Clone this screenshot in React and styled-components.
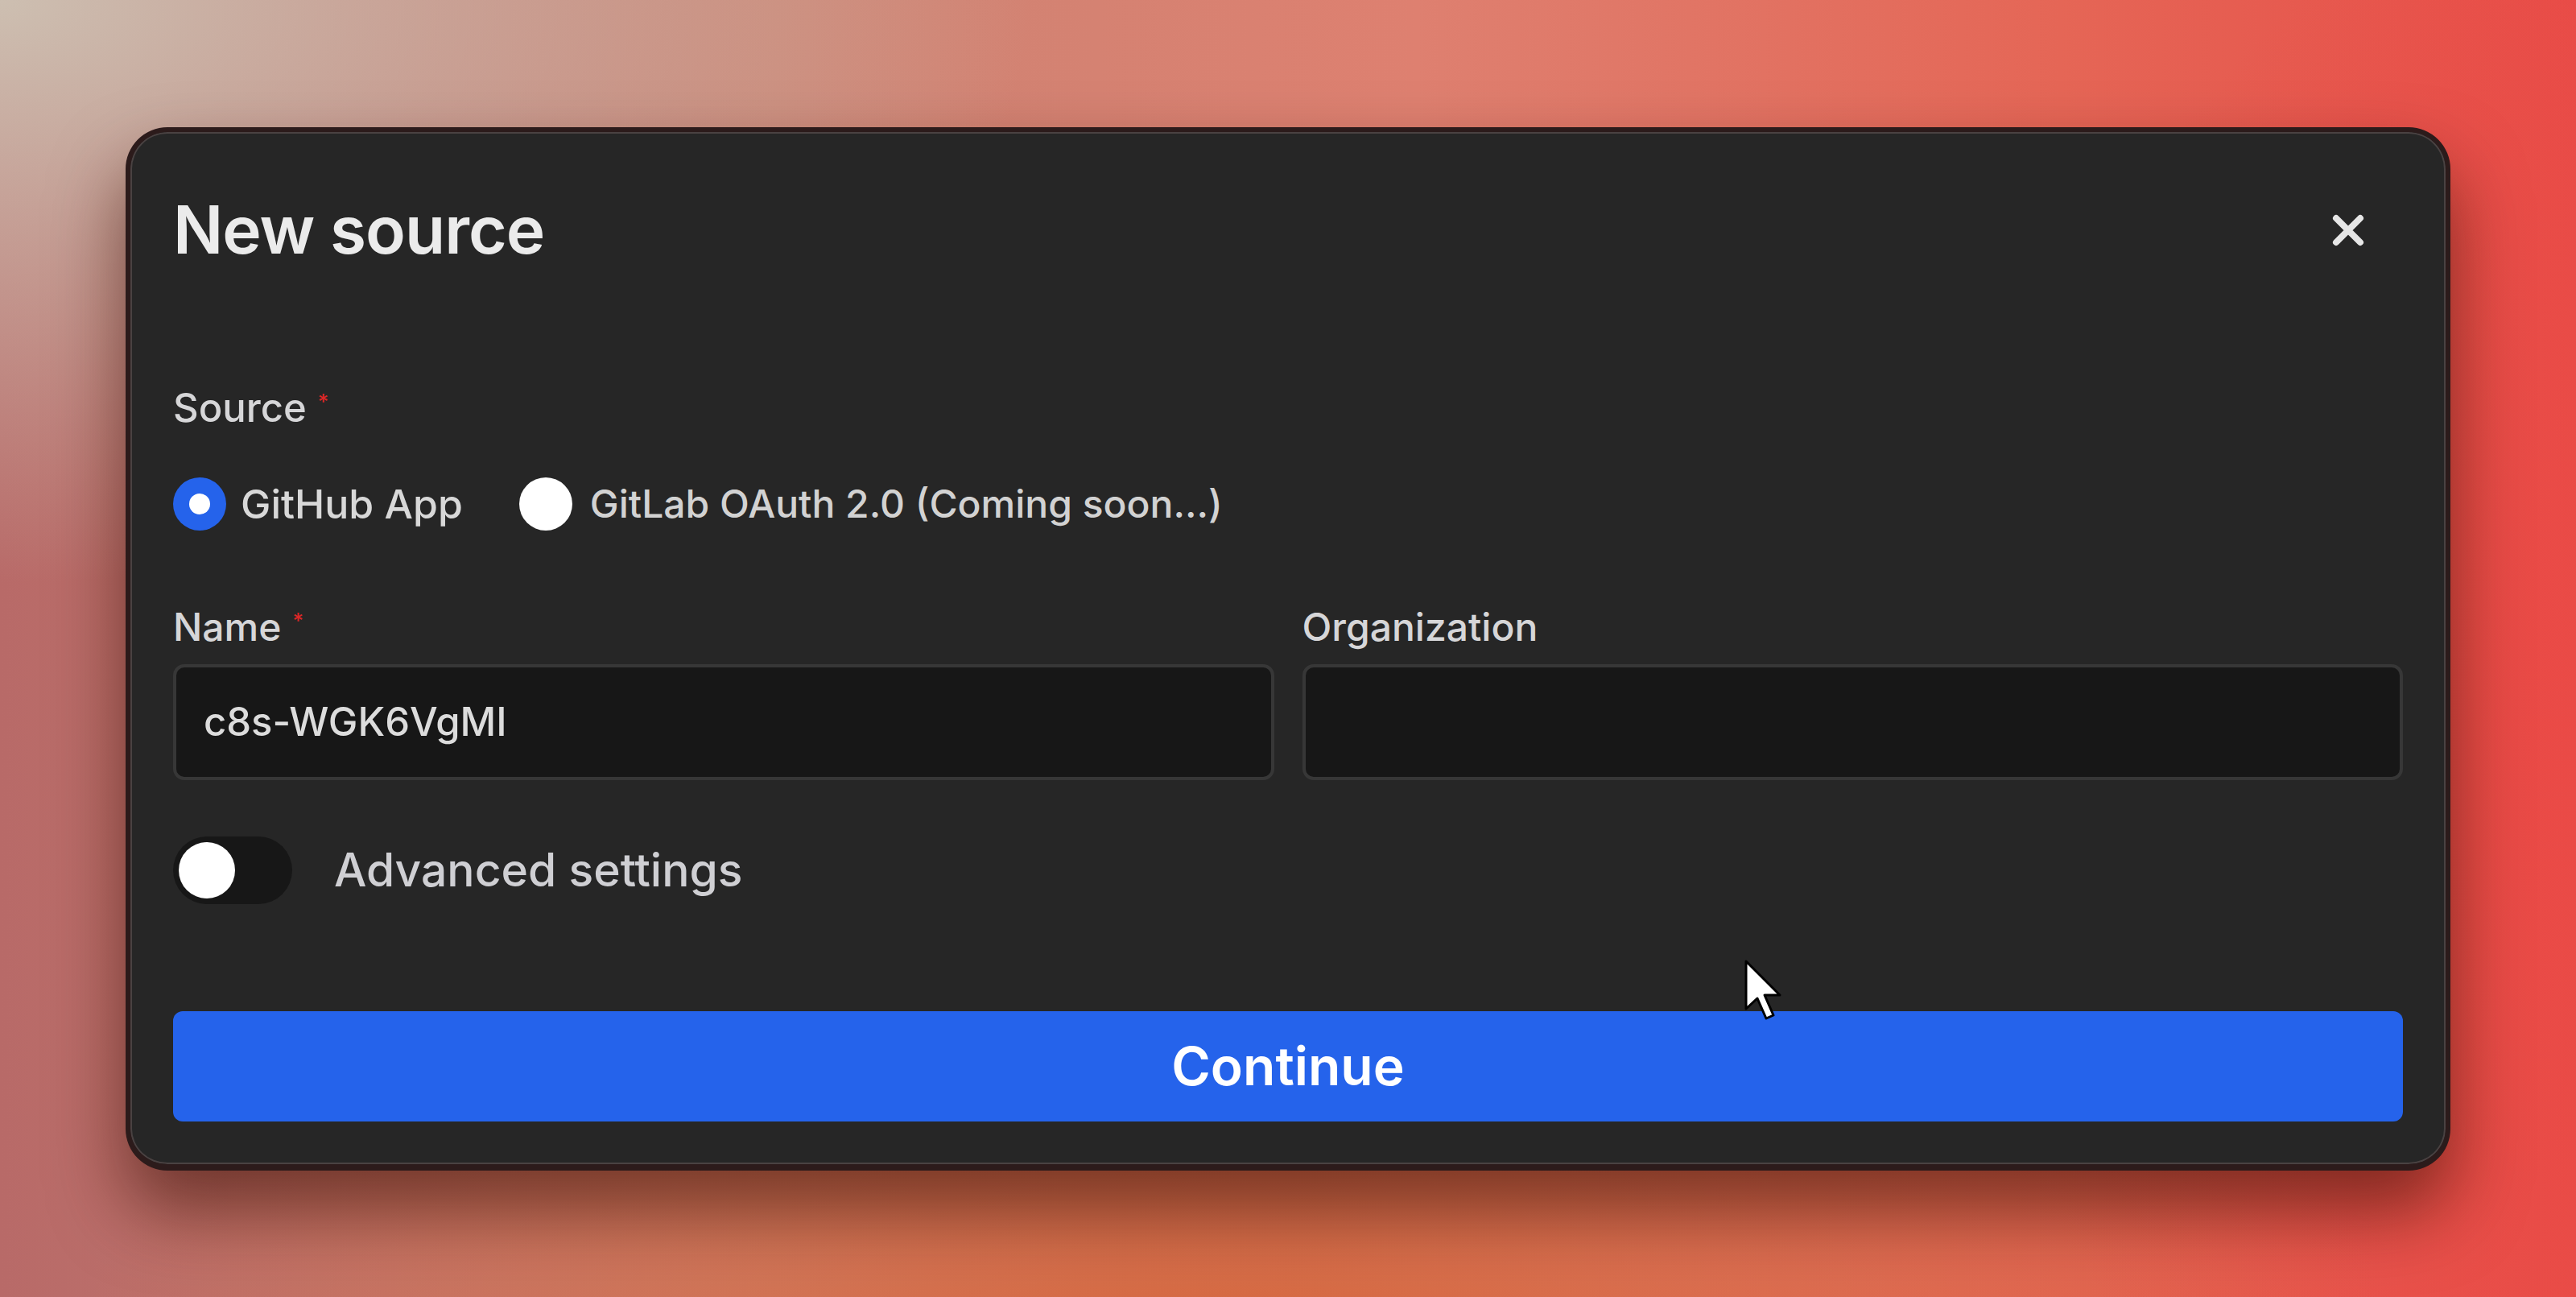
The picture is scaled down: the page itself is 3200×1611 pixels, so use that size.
import React, {useState} from 'react';
import styled, {createGlobalStyle} from 'styled-components';

const GlobalStyle = createGlobalStyle`
  html, body {
    margin: 0;
    padding: 0;
  }
  body {
    font-family: Inter, 'Noto Sans', 'Liberation Sans', sans-serif;
  }
  * {
    box-sizing: border-box;
  }
`;

// page with the blurred warm backdrop
const Backdrop = styled.div`
  position: relative;
  min-height: 100vh;
  display: flex;
  align-items: center;
  justify-content: center;
  overflow: hidden;
  background:
    radial-gradient(ellipse 40% 45% at 0% 0%, #cdbfb1 0%, rgba(205,191,177,0) 100%),
    radial-gradient(ellipse 45% 40% at 48% 105%, #d6683e 0%, rgba(214,104,62,0) 100%),
    radial-gradient(ellipse 25% 70% at 102% 60%, #ea4a46 0%, rgba(234,74,70,0) 100%),
    linear-gradient(90deg, #b86a68 0%, #cc8474 30%, #de8070 55%, #e56656 80%, #e84c47 100%);
`;

const Dialog = styled.div`
  width: 2888px;
  display: flex;
  flex-direction: column;
  padding: 80px 53px 53px;
  background: #262626;
  border: 6px solid #2c1b1b;
  border-bottom-width: 8px;
  border-radius: 52px;
  box-shadow:
    inset 0 0 0 2px #4a4242,
    0 50px 90px rgba(60, 15, 5, 0.6);
`;

const Header = styled.div`
  display: flex;
  align-items: center;
  justify-content: space-between;
  height: 84px;
`;

const Title = styled.h2`
  margin: 0;
  font-size: 82px;
  line-height: 1;
  font-weight: 600;
  color: #ebebeb;
  letter-spacing: -1px;
`;

const CloseButton = styled.button`
  width: 84px;
  height: 84px;
  margin-right: 26px;
  padding: 0;
  border: none;
  background: transparent;
  display: flex;
  align-items: center;
  justify-content: center;
  color: #e6e6e6;
  cursor: pointer;
`;

const Field = styled.div`
  display: flex;
  flex-direction: column;
  margin-top: ${p => p.$top || 0}px;
  min-width: 0;
`;

const Label = styled.label`
  display: block;
  font-size: ${p => p.$size || 48}px;
  line-height: 50px;
  font-weight: 500;
  color: #d6d6d8;
`;

const Required = styled.span`
  color: #dc2626;
  font-size: 26px;
  vertical-align: top;
  margin-left: 14px;
  line-height: 26px;
  position: relative;
  top: 4px;
`;

const RadioRow = styled.div`
  display: flex;
  align-items: center;
  margin-top: 60px;
  height: 68px;
`;

const RadioOption = styled.label`
  display: flex;
  align-items: center;
  gap: ${p => (p.$disabled ? 22 : 18)}px;
  margin-right: 70px;
  font-size: ${p => (p.$disabled ? 48 : 50)}px;
  font-weight: 500;
  color: ${p => (p.$disabled ? '#d2d2d2' : '#d8d8d8')};
  cursor: pointer;
`;

const RadioDot = styled.span`
  width: 66px;
  height: 66px;
  border-radius: 50%;
  background: ${p => (p.$checked ? '#2563eb' : '#ffffff')};
  display: flex;
  align-items: center;
  justify-content: center;
  flex-shrink: 0;

  &::after {
    content: '';
    width: 26px;
    height: 26px;
    border-radius: 50%;
    background: #ffffff;
    display: ${p => (p.$checked ? 'block' : 'none')};
  }
`;

const Grid = styled.div`
  display: grid;
  grid-template-columns: 1fr 1fr;
  column-gap: 35px;
  margin-top: 94px;
`;

const Input = styled.input`
  margin-top: 21px;
  height: 144px;
  width: 100%;
  padding: 0 34px;
  background: #171717;
  border: 4px solid #373737;
  border-radius: 14px;
  font-family: inherit;
  font-size: 49px;
  font-weight: 500;
  color: #dcdcdc;
  outline: none;
`;

const ToggleRow = styled.div`
  display: flex;
  align-items: center;
  gap: 52px;
  margin-top: 70px;
  height: 84px;
`;

const Track = styled.button`
  width: 148px;
  height: 84px;
  padding: 7px;
  border: none;
  border-radius: 42px;
  background: ${p => (p.$on ? '#2563eb' : '#171717')};
  display: flex;
  justify-content: ${p => (p.$on ? 'flex-end' : 'flex-start')};
  cursor: pointer;
`;

const Knob = styled.span`
  width: 70px;
  height: 70px;
  border-radius: 50%;
  background: #ffffff;
`;

const ToggleText = styled.span`
  font-size: 57px;
  font-weight: 500;
  color: #cfcfd3;
`;

const PrimaryButton = styled.button`
  margin-top: 133px;
  height: 137px;
  width: 100%;
  border: none;
  border-radius: 12px;
  background: #2563eb;
  color: #ffffff;
  font-family: inherit;
  font-size: 66px;
  font-weight: 600;
  cursor: pointer;
`;

const Pointer = styled.svg`
  position: absolute;
  left: 2166px;
  top: 1191px;
  pointer-events: none;
`;

function CloseIcon() {
  return (
    <svg width="44" height="44" viewBox="0 0 44 44">
      <path d="M7 7 L37 37 M37 7 L7 37" stroke="currentColor" strokeWidth="8" strokeLinecap="round" />
    </svg>
  );
}

function App() {
  const [source, setSource] = useState('github');
  const [name, setName] = useState('c8s-WGK6VgMI');
  const [org, setOrg] = useState('');
  const [advanced, setAdvanced] = useState(false);

  return (
    <Backdrop>
      <GlobalStyle />
      <Dialog>
        <Header>
          <Title>New source</Title>
          <CloseButton aria-label="Close"><CloseIcon /></CloseButton>
        </Header>

        <Field $top={154}>
          <Label $size={49}>Source<Required>*</Required></Label>
          <RadioRow>
            <RadioOption onClick={() => setSource('github')}>
              <RadioDot $checked={source === 'github'} />
              GitHub App
            </RadioOption>
            <RadioOption $disabled>
              <RadioDot $checked={source === 'gitlab'} />
              GitLab OAuth 2.0 (Coming soon...)
            </RadioOption>
          </RadioRow>
        </Field>

        <Grid>
          <Field>
            <Label>Name<Required>*</Required></Label>
            <Input value={name} onChange={e => setName(e.target.value)} />
          </Field>
          <Field>
            <Label>Organization</Label>
            <Input value={org} onChange={e => setOrg(e.target.value)} />
          </Field>
        </Grid>

        <ToggleRow>
          <Track $on={advanced} onClick={() => setAdvanced(!advanced)}>
            <Knob />
          </Track>
          <ToggleText>Advanced settings</ToggleText>
        </ToggleRow>

        <PrimaryButton>Continue</PrimaryButton>
      </Dialog>

      <Pointer width="50" height="78" viewBox="0 0 50 78">
        <path d="M3 3 L3 62 L17 49 L28 74 L37 70 L26 45 L45 45 Z" fill="#ffffff" stroke="#000000" strokeWidth="3" strokeLinejoin="round" />
      </Pointer>
    </Backdrop>
  );
}

export default App;
